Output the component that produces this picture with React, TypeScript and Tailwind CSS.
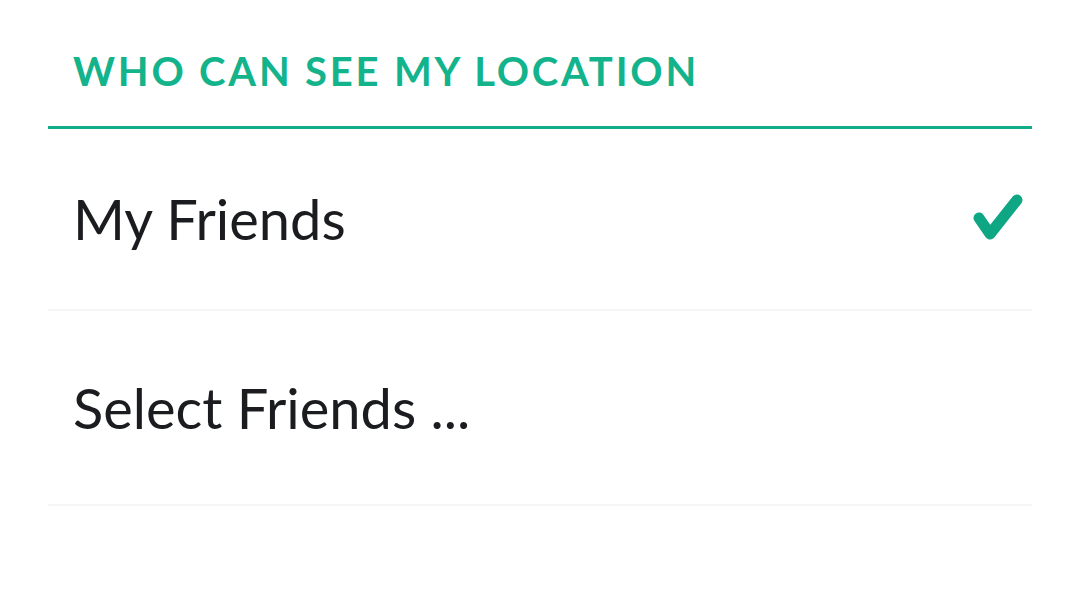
import React from 'react'

type Option = { id: string; label: string; selected?: boolean }

const options: Option[] = [
    { id: 'friends', label: 'My Friends', selected: true },
    { id: 'select', label: 'Select Friends ...' },
]

function Check() {
    return (
        <svg width="60" height="56" viewBox="0 0 60 56" fill="none" aria-hidden="true">
            <path
                d="M13 27 L24 43 L51 9"
                stroke="#0fa683"
                strokeWidth="11"
                strokeLinecap="round"
                strokeLinejoin="round"
            />
        </svg>
    )
}

export default function App() {
    return (
        <div className="w-[1080px] h-[608px] bg-white px-[48px] font-['Lato','Noto_Sans',sans-serif]">
            <div className="h-[126px] flex items-start pt-[49px] pl-[25px]">
                <h2 className="text-[40px] leading-[44px] font-bold tracking-[0.07em] text-[#13b38b]">
                    WHO CAN SEE MY LOCATION
                </h2>
            </div>
            <div className="h-[3px] bg-[#13ad8a]" />
            {options.map((opt, i) => (
                <div
                    key={opt.id}
                    className={`flex items-center justify-between pl-[25px] pr-[6px] border-b-2 border-[#f6f6f6] ${
                        i === 0 ? 'h-[182px]' : 'h-[195px]'
                    }`}
                >
                    <span className="text-[56px] leading-none text-[#1b1c1f]">{opt.label}</span>
                    {opt.selected && <Check />}
                </div>
            ))}
        </div>
    )
}
